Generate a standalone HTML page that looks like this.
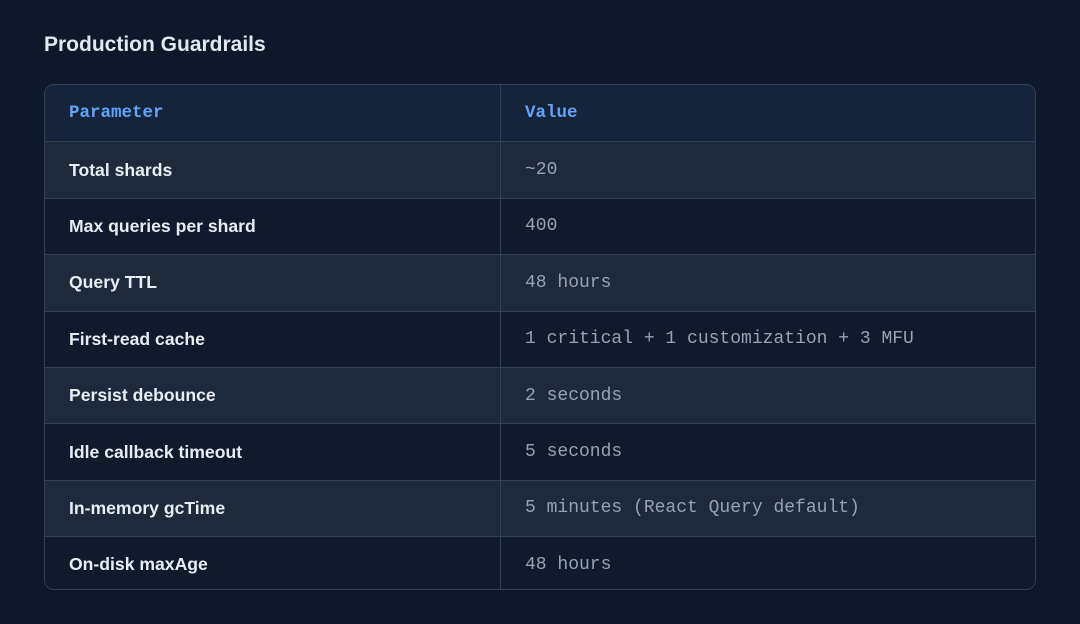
<!DOCTYPE html>
<html><head><style>
body{margin:0;width:1080px;height:624px;background:#0f172a;font-family:"Liberation Sans",sans-serif;overflow:hidden}
h2{position:absolute;left:44px;top:33px;margin:0;font-size:21px;font-weight:700;color:#e2e8f0}
.t{position:absolute;left:44px;top:84px;width:992px;height:506px;border:1px solid #334155;border-radius:10px;overflow:hidden;box-sizing:border-box}
.r{display:flex;height:56.4px;border-top:1px solid #334155;box-sizing:border-box;align-items:center}
.r:first-child{border-top:none;background:#15233b}
.r:nth-child(even){background:#1e293b}
.r:nth-child(odd):not(:first-child){background:#111a2c}
.a{width:456px;padding-left:24px;box-sizing:border-box;height:100%;display:flex;align-items:center;border-right:1px solid #334155;color:#e8edf3;font-size:17.6px;font-weight:700}
.b{padding-left:24px;font-family:"Liberation Mono",monospace;font-size:18px;color:#94a3b8}
.h .a,.h .b{font-family:"Liberation Mono",monospace;font-weight:700;color:#60a5fa;font-size:17.5px}
</style></head><body>
<h2>Production Guardrails</h2>
<div class="t">
<div class="r h"><div class="a">Parameter</div><div class="b">Value</div></div>
<div class="r"><div class="a">Total shards</div><div class="b">~20</div></div>
<div class="r"><div class="a">Max queries per shard</div><div class="b">400</div></div>
<div class="r"><div class="a">Query TTL</div><div class="b">48 hours</div></div>
<div class="r"><div class="a">First-read cache</div><div class="b">1 critical + 1 customization + 3 MFU</div></div>
<div class="r"><div class="a">Persist debounce</div><div class="b">2 seconds</div></div>
<div class="r"><div class="a">Idle callback timeout</div><div class="b">5 seconds</div></div>
<div class="r"><div class="a">In-memory gcTime</div><div class="b">5 minutes (React Query default)</div></div>
<div class="r"><div class="a">On-disk maxAge</div><div class="b">48 hours</div></div>
</div>
</body></html>
